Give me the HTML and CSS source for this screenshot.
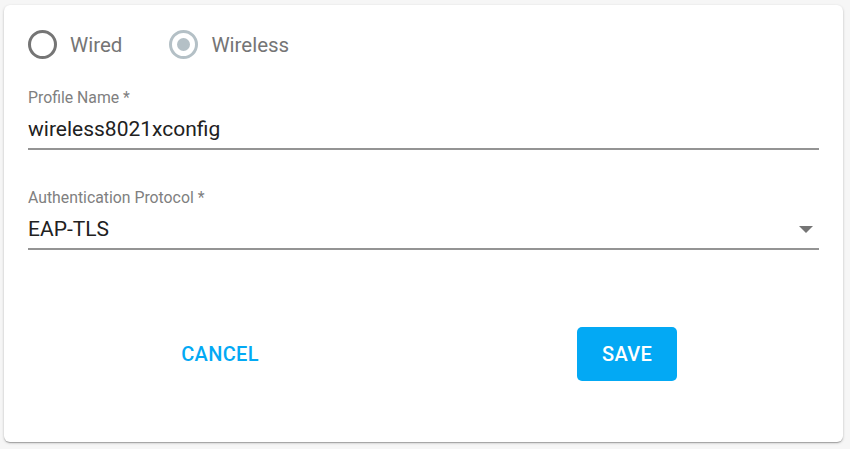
FILE: index.html
```html
<!DOCTYPE html>
<html>
<head>
<meta charset="utf-8">
<link rel="stylesheet" href="styles.css">
</head>
<body>
<div class="card">
  <div class="radio-row">
    <label class="radio">
      <span class="radio-circle"></span>
      <span class="radio-text">Wired</span>
    </label>
    <label class="radio disabled">
      <span class="radio-circle checked"><span class="radio-dot"></span></span>
      <span class="radio-text">Wireless</span>
    </label>
  </div>

  <div class="field first">
    <div class="field-label">Profile Name *</div>
    <div class="field-input">wireless8021xconfig</div>
  </div>

  <div class="field">
    <div class="field-label">Authentication Protocol *</div>
    <div class="field-input select">
      <span>EAP-TLS</span>
      <svg class="arrow" width="14" height="7" viewBox="0 0 14 7"><path d="M0 0 L14 0 L7 7 Z" fill="#757575"/></svg>
    </div>
  </div>

  <div class="actions">
    <button class="btn btn-text">CANCEL</button>
    <button class="btn btn-primary">SAVE</button>
  </div>
</div>
</body>
</html>
```

FILE: styles.css
```css
html, body {
  margin: 0;
  padding: 0;
}
body {
  background: #f6f6f6;
  font-family: Roboto, "Liberation Sans", sans-serif;
  width: 850px;
  height: 449px;
  overflow: hidden;
}
.card {
  margin: 5px 0 0 4px;
  width: 839px;
  height: 437px;
  box-sizing: border-box;
  background: #fff;
  border-radius: 6px;
  box-shadow: 0 1px 3px rgba(0,0,0,0.2), 0 1px 1px rgba(0,0,0,0.14), 0 2px 1px -1px rgba(0,0,0,0.12);
  padding: 25px 24px 0 24px;
}
.radio-row {
  display: flex;
  align-items: center;
  height: 29px;
}
.radio {
  display: flex;
  align-items: center;
  gap: 13px;
  margin-right: 47px;
}
.radio-circle {
  width: 29px;
  height: 29px;
  box-sizing: border-box;
  border: 3px solid #757575;
  border-radius: 50%;
  display: flex;
  align-items: center;
  justify-content: center;
}
.disabled .radio-circle {
  border-color: #b4c0c6;
}
.radio-dot {
  width: 13px;
  height: 13px;
  border-radius: 50%;
  background: #b4c0c6;
}
.radio-text {
  font-size: 20.5px;
  color: #757575;
  line-height: 24px;
}
.field {
  margin-top: 39px;
  border-bottom: 2px solid #949494;
  padding-bottom: 7px;
}
.field.first {
  margin-top: 30px;
}
.field-label {
  font-size: 15.8px;
  line-height: 18px;
  color: #808080;
}
.field-input {
  margin-top: 10px;
  font-size: 21px;
  line-height: 24px;
  color: #212121;
}
.select {
  display: flex;
  align-items: center;
  justify-content: space-between;
}
.arrow {
  margin-right: 6px;
}
.actions {
  display: flex;
  align-items: center;
  margin-top: 77px;
  padding-left: 142px;
  gap: 307px;
}
.btn {
  font-family: Roboto, "Liberation Sans", sans-serif;
  font-size: 20px;
  font-weight: 500;
  border: none;
  width: 100px;
  height: 54px;
  border-radius: 5px;
  padding: 0;
  letter-spacing: 0.3px;
}
.btn-text {
  background: transparent;
  color: #03a9f4;
}
.btn-primary {
  background: #03a9f4;
  color: #fff;
}
```
